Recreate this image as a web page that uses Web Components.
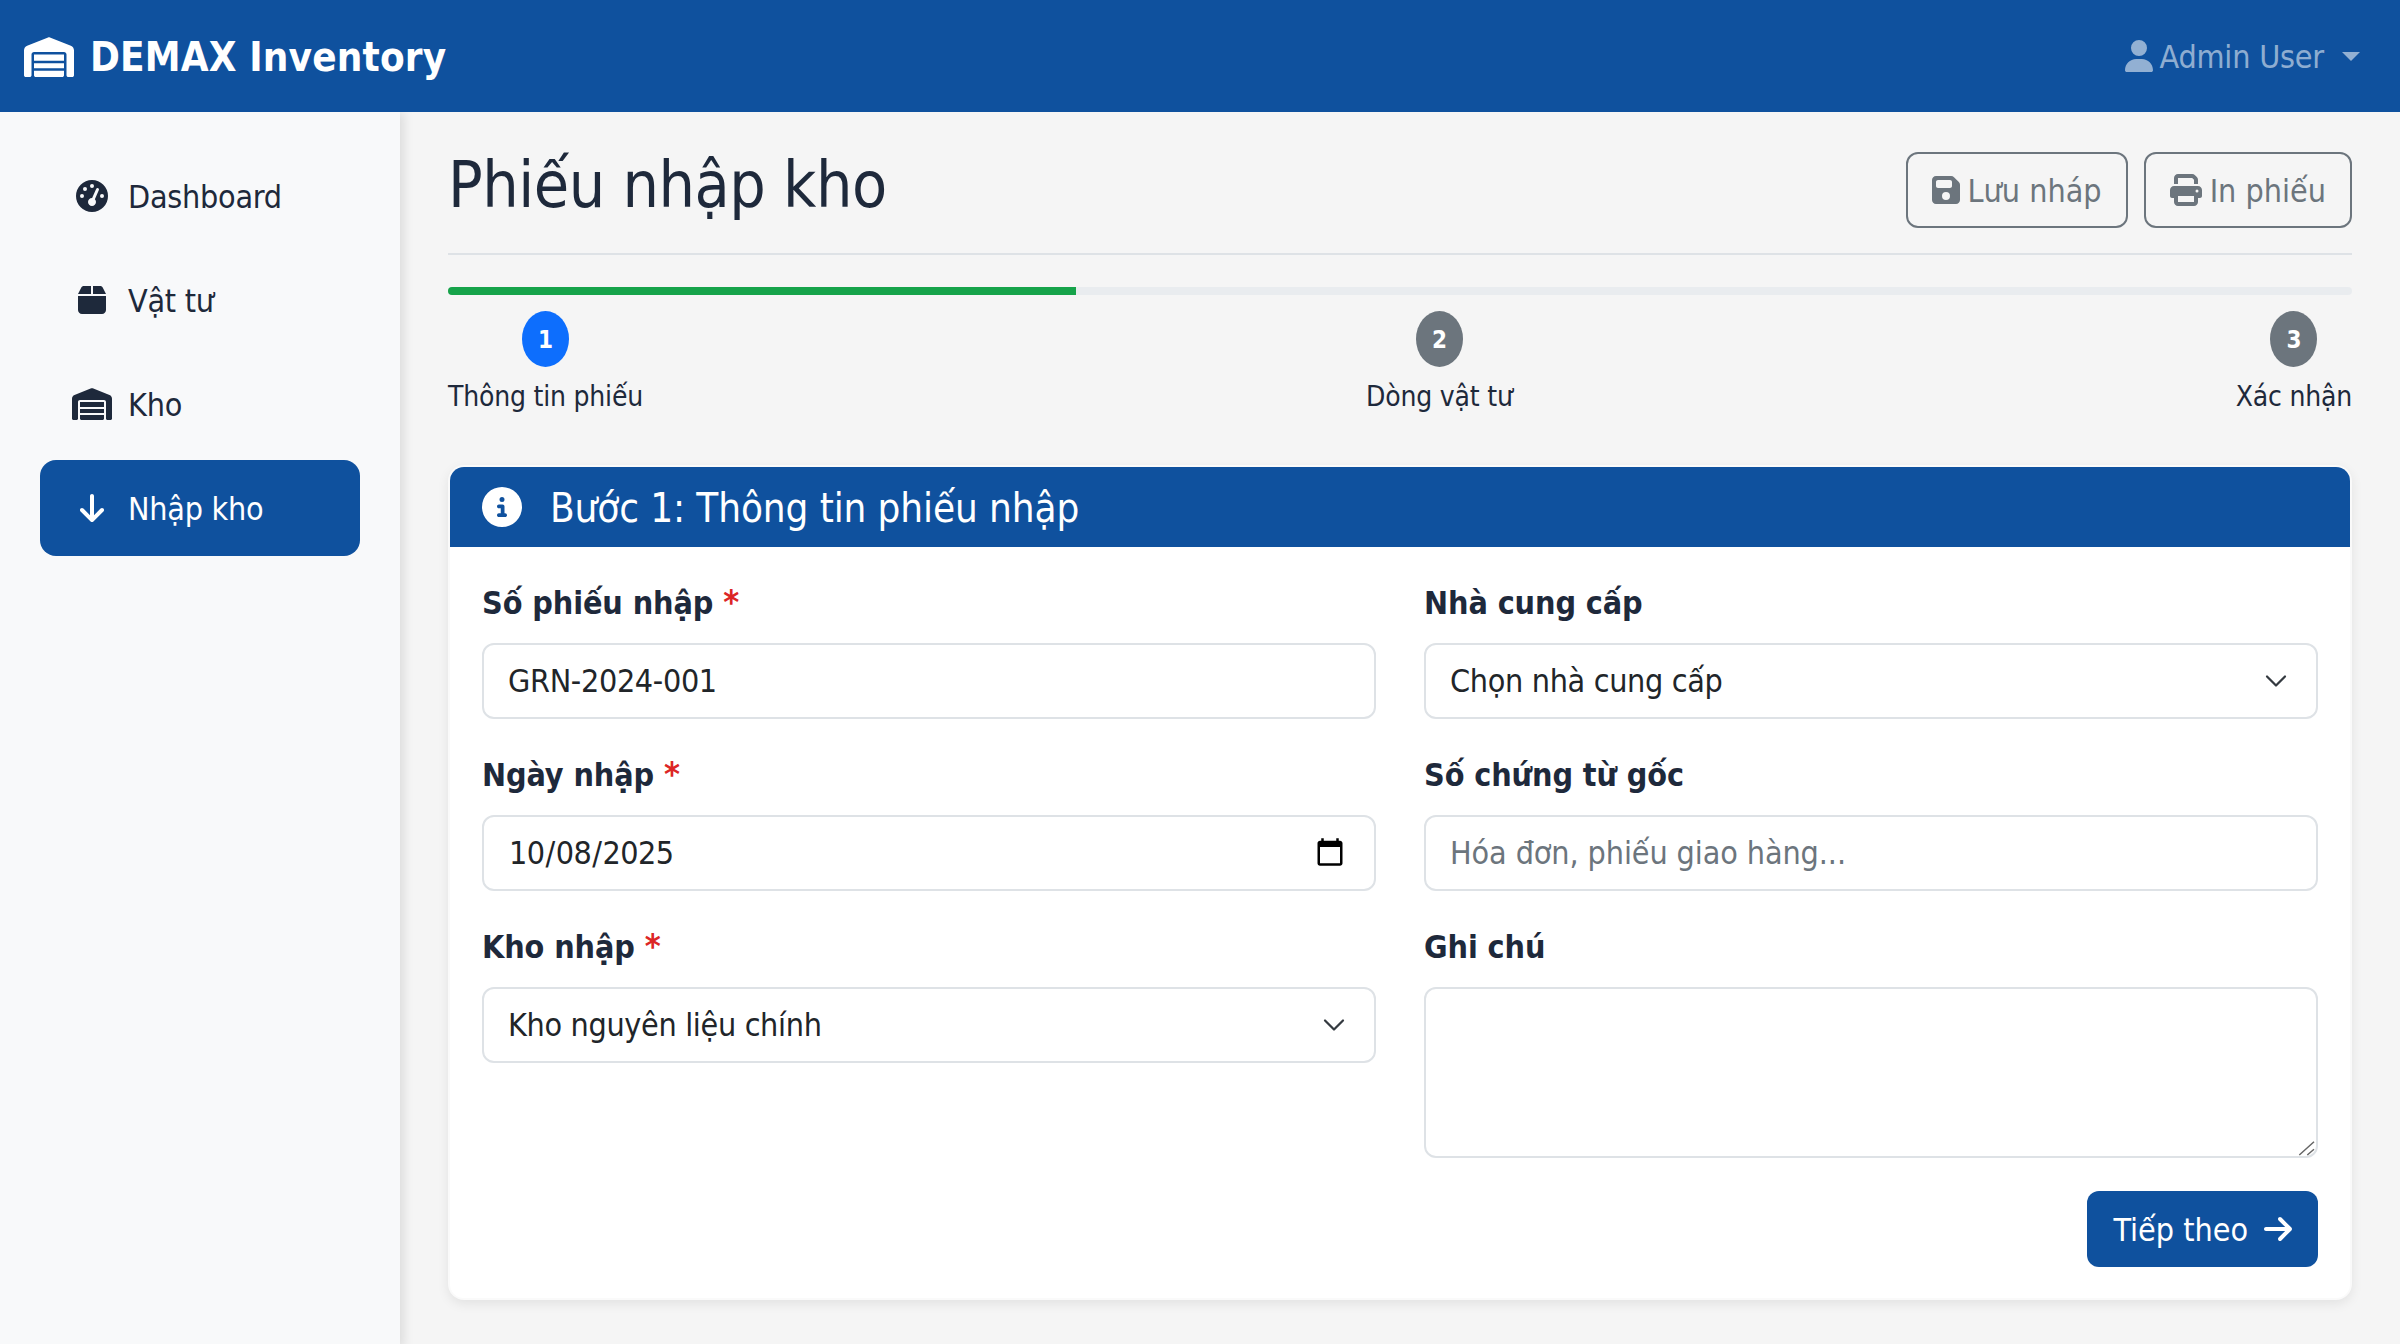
<!DOCTYPE html>
<html lang="vi">
<head>
<meta charset="utf-8">
<title>DEMAX Inventory</title>
<style>
  html, body { height: 100%; }
  body {
    margin: 0;
    overflow: hidden;
    background: #f5f5f5;
    color: #1e293b;
    font: 400 32px/48px "DejaVu Sans Condensed", "DejaVu Sans", sans-serif;
  }
</style>
</head>
<body>
<inventory-app>
  <app-navbar slot="top" user="Admin User">DEMAX Inventory</app-navbar>
  <app-sidebar slot="side">
    <nav-item icon="gauge">Dashboard</nav-item>
    <nav-item icon="box">Vật tư</nav-item>
    <nav-item icon="warehouse">Kho</nav-item>
    <nav-item icon="down" active>Nhập kho</nav-item>
  </app-sidebar>
  <page-header>
    Phiếu nhập kho
    <outline-button slot="actions" icon="floppy">Lưu nháp</outline-button>
    <outline-button slot="actions" icon="print">In phiếu</outline-button>
  </page-header>
  <step-progress percent="33">
    <step-item number="1" current>Thông tin phiếu</step-item>
    <step-item number="2">Dòng vật tư</step-item>
    <step-item number="3">Xác nhận</step-item>
  </step-progress>
  <form-card heading="Bước 1: Thông tin phiếu nhập">
    <form-field slot="left" required>Số phiếu nhập<input-box slot="control" value="GRN-2024-001"></input-box></form-field>
    <form-field slot="left" required>Ngày nhập<input-box slot="control" type="date" value="2025-10-08"></input-box></form-field>
    <form-field slot="left" required>Kho nhập<select-box slot="control" value="Kho nguyên liệu chính"></select-box></form-field>
    <form-field slot="right">Nhà cung cấp<select-box slot="control" value="Chọn nhà cung cấp"></select-box></form-field>
    <form-field slot="right">Số chứng từ gốc<input-box slot="control" placeholder="Hóa đơn, phiếu giao hàng..."></input-box></form-field>
    <form-field slot="right">Ghi chú<note-box slot="control"></note-box></form-field>
    <primary-button slot="footer">Tiếp theo</primary-button>
  </form-card>
</inventory-app>

<script>
// Font Awesome style glyphs: [viewBox width, path]
const icons = {
  warehouse: [640, 'M0 488V171.3c0-26.2 15.9-49.7 40.2-59.4L308.1 4.8c7.6-3.1 16.1-3.1 23.8 0L599.8 111.9c24.3 9.7 40.2 33.3 40.2 59.4V488c0 13.3-10.7 24-24 24H568c-13.3 0-24-10.7-24-24V224c0-17.7-14.3-32-32-32H128c-17.7 0-32 14.3-32 32V488c0 13.3-10.7 24-24 24H24c-13.3 0-24-10.7-24-24zm488 24l-336 0c-13.3 0-24-10.7-24-24V432H512l0 56c0 13.3-10.7 24-24 24zM128 400V336H512v64H128zm0-96V224H512l0 80H128z'],
  gauge: [512, 'M0 256a256 256 0 1 1 512 0A256 256 0 1 1 0 256zM288 96a32 32 0 1 0 -64 0 32 32 0 1 0 64 0zM256 416c35.3 0 64-28.7 64-64c0-17.4-6.9-33.1-18.1-44.6L366 161.7c5.3-12.1-.2-26.3-12.3-31.6s-26.3 .2-31.6 12.3L257.9 288c-.6 0-1.3 0-1.9 0c-35.3 0-64 28.7-64 64s28.7 64 64 64zM176 144a32 32 0 1 0 -64 0 32 32 0 1 0 64 0zM96 288a32 32 0 1 0 0-64 32 32 0 1 0 0 64zm352-32a32 32 0 1 0 -64 0 32 32 0 1 0 64 0z'],
  box: [448, 'M50.7 58.5L0 160H208V32H93.7C75.5 32 58.9 42.3 50.7 58.5zM240 160H448L397.3 58.5C389.1 42.3 372.5 32 354.3 32H240V160zm208 32H0V416c0 35.3 28.7 64 64 64H384c35.3 0 64-28.7 64-64V192z'],
  down: [384, 'M169.4 470.6c12.5 12.5 32.8 12.5 45.3 0l160-160c12.5-12.5 12.5-32.8 0-45.3s-32.8-12.5-45.3 0L224 370.8 224 64c0-17.7-14.3-32-32-32s-32 14.3-32 32l0 306.7L54.6 265.4c-12.5-12.5-32.8-12.5-45.3 0s-12.5 32.8 0 45.3l160 160z'],
  right: [448, 'M438.6 278.6c12.5-12.5 12.5-32.8 0-45.3l-160-160c-12.5-12.5-32.8-12.5-45.3 0s-12.5 32.8 0 45.3L338.8 224 32 224c-17.7 0-32 14.3-32 32s14.3 32 32 32l306.7 0L233.4 393.4c-12.5 12.5-12.5 32.8 0 45.3s32.8 12.5 45.3 0l160-160z'],
  user: [448, 'M224 256A128 128 0 1 0 224 0a128 128 0 1 0 0 256zm-45.7 48C79.8 304 0 383.8 0 482.3C0 498.7 13.3 512 29.7 512H418.3c16.4 0 29.7-13.3 29.7-29.7C448 383.8 368.2 304 269.7 304H178.3z'],
  floppy: [448, 'M64 32C28.7 32 0 60.7 0 96V416c0 35.3 28.7 64 64 64H384c35.3 0 64-28.7 64-64V173.3c0-17-6.7-33.3-18.7-45.3L352 50.7C340 38.7 323.7 32 306.7 32H64zm0 96c0-17.7 14.3-32 32-32H288c17.7 0 32 14.3 32 32v64c0 17.7-14.3 32-32 32H96c-17.7 0-32-14.3-32-32V128zM224 288a64 64 0 1 1 0 128 64 64 0 1 1 0-128z'],
  print: [512, 'M128 0C92.7 0 64 28.7 64 64v96h64V64H354.7L384 93.3V160h64V93.3c0-17-6.7-33.3-18.7-45.3L400 18.7C388 6.7 371.7 0 354.7 0H128zM384 352v32 64H128V384 368 352H384zm64 32h32c17.7 0 32-14.3 32-32V256c0-35.3-28.7-64-64-64H64c-35.3 0-64 28.7-64 64v96c0 17.7 14.3 32 32 32H64v64c0 35.3 28.7 64 64 64H384c35.3 0 64-28.7 64-64V384zM432 248a24 24 0 1 1 0 48 24 24 0 1 1 0-48z'],
  info: [512, 'M256 512A256 256 0 1 0 256 0a256 256 0 1 0 0 512zM216 336h24V272H216c-13.3 0-24-10.7-24-24s10.7-24 24-24h48c13.3 0 24 10.7 24 24v88h8c13.3 0 24 10.7 24 24s-10.7 24-24 24H216c-13.3 0-24-10.7-24-24s10.7-24 24-24zm40-208a32 32 0 1 1 0 64 32 32 0 1 1 0-64z']
}

/**
 * Returns the svg markup of a named icon, size is the em box in pixels.
 */
function icon (name, size) {
  const [width, path] = icons[name]
  return `<svg class="icon" width="${width / 512 * size}" height="${size}" viewBox="0 0 ${width} 512" fill="currentColor" aria-hidden="true"><path d="${path}"/></svg>`
}

/**
 * Defines a custom element whose shadow root is rendered once from a function.
 */
function define (tag, render) {
  customElements.define(tag, class extends HTMLElement {
    constructor () {
      super()
      this.attachShadow({ mode: 'open' }).innerHTML = render(this)
    }
  })
}

define('inventory-app', () => `
  <style>
    :host { display: grid; grid-template: 112px 1fr / 400px 1fr; height: 100vh; overflow: hidden; }
    ::slotted([slot="top"]) { grid-column: 1 / 3; }
    main { padding: 40px 48px 48px 48px; min-width: 0; }
  </style>
  <slot name="top"></slot>
  <slot name="side"></slot>
  <main><slot></slot></main>
`)

define('app-navbar', (el) => `
  <style>
    :host { display: flex; align-items: center; justify-content: space-between; padding: 0 40px 0 24px; background: #0f519e; position: relative; z-index: 2; }
    .brand { display: flex; align-items: center; gap: 16px; padding-top: 2px; color: #fff; font-size: 40px; font-weight: 700; line-height: 60px; letter-spacing: .15px; }
    .user { display: flex; align-items: center; color: rgba(255, 255, 255, .55); letter-spacing: -.2px; }
    .user svg { margin-right: 7px; }
    .user span:first-of-type { padding-top: 2px; }
    .caret { width: 0; height: 0; margin-left: 18px; border-top: 9.6px solid currentColor; border-left: 9.6px solid transparent; border-right: 9.6px solid transparent; }
  </style>
  <div class="brand">${icon('warehouse', 40)}<slot></slot></div>
  <div class="user">${icon('user', 32)}<span>${el.getAttribute('user')}</span><span class="caret"></span></div>
`)

define('app-sidebar', () => `
  <style>
    :host { display: flex; flex-direction: column; gap: 8px; padding: 36px 40px; background: #f8f9fa; box-shadow: 4px 0 10px rgba(0, 0, 0, .1); position: relative; z-index: 1; }
  </style>
  <slot></slot>
`)

define('nav-item', (el) => `
  <style>
    :host { display: flex; align-items: center; gap: 16px; height: 96px; padding: 0 32px; border-radius: 16px; letter-spacing: -.25px; }
    :host([active]) { background: #0f519e; color: #fff; }
    .slot { display: flex; justify-content: center; width: 40px; }
    .text { padding-top: 1px; }
  </style>
  <span class="slot">${icon(el.getAttribute('icon'), 32)}</span>
  <span class="text"><slot></slot></span>
`)

define('page-header', () => `
  <style>
    :host { display: flex; align-items: flex-start; justify-content: space-between; padding: 0 0 24px; border-bottom: 2px solid #dee2e6; margin-bottom: 32px; }
    h2 { margin: 0 0 10px; font-size: 64px; font-weight: 400; line-height: 67px; letter-spacing: -.5px; }
    div { display: flex; gap: 16px; }
  </style>
  <h2><slot></slot></h2>
  <div><slot name="actions"></slot></div>
`)

define('outline-button', (el) => `
  <style>
    :host { display: flex; align-items: center; gap: 8px; box-sizing: border-box; height: 76px; padding: 0 24px; border: 2px solid #6c757d; border-radius: 12px; color: #6c757d; }
    span { padding-top: 1px; }
  </style>
  ${icon(el.getAttribute('icon'), 32)}
  <span><slot></slot></span>
`)

define('step-progress', (el) => `
  <style>
    :host { display: block; margin-bottom: 47px; }
    .track { height: 8px; margin-bottom: 16px; border-radius: 8px; background: #e9ecef; overflow: hidden; }
    .fill { height: 100%; width: ${el.getAttribute('percent')}%; background: #16a34a; }
    .steps { display: flex; justify-content: space-between; }
  </style>
  <div class="track"><div class="fill"></div></div>
  <div class="steps"><slot></slot></div>
`)

define('step-item', (el) => `
  <style>
    :host { display: flex; flex-direction: column; align-items: center; gap: 9px; font-size: 28px; line-height: 42px; letter-spacing: -.2px; }
    .badge { display: flex; align-items: center; justify-content: center; width: 47px; height: 56px; padding-top: 1px; box-sizing: border-box; border-radius: 50%; background: #6c757d; color: #fff; font-size: 24px; font-weight: 700; }
    :host([current]) .badge { background: #0d6efd; }
  </style>
  <span class="badge">${el.getAttribute('number')}</span>
  <span><slot></slot></span>
`)

define('form-card', (el) => `
  <style>
    :host { display: block; border: 2px solid rgba(0, 0, 0, .02); border-radius: 16px; background: #fff; box-shadow: 0 4px 12px rgba(0, 0, 0, .08); overflow: hidden; }
    header { display: flex; align-items: center; gap: 28px; height: 80px; padding: 0 32px; background: #0f519e; color: #fff; font-size: 40px; letter-spacing: -.1px; }
    header span { padding-top: 2px; }
    .body { display: grid; grid-template-columns: 1fr 1fr; gap: 0 48px; padding: 32px 32px 31px; }
    .col { display: flex; flex-direction: column; gap: 32px; }
    .footer { grid-column: 1 / 3; display: flex; justify-content: flex-end; margin-top: 33px; }
  </style>
  <header>${icon('info', 40)}<span>${el.getAttribute('heading')}</span></header>
  <div class="body">
    <div class="col"><slot name="left"></slot></div>
    <div class="col"><slot name="right"></slot></div>
    <div class="footer"><slot name="footer"></slot></div>
  </div>
`)

define('form-field', (el) => `
  <style>
    :host { display: block; }
    label { display: block; margin-bottom: 16px; font-weight: 700; letter-spacing: -.1px; }
    b { color: #dc2626; font-size: 34px; line-height: 0; }
  </style>
  <label><slot></slot>${el.hasAttribute('required') ? ' <b>*</b>' : ''}</label>
  <slot name="control"></slot>
`)

const controlStyle = `
  .control {
    display: block; box-sizing: border-box; width: 100%; height: 76px; margin: 0; padding: 0 24px;
    border: 2px solid #dee2e6; border-radius: 12px; outline: 0; background: #fff; color: #212529;
    font: inherit; letter-spacing: -.33px;
  }
  .control::placeholder { color: #6c757d; opacity: 1; letter-spacing: -.1px; }
`

define('input-box', (el) => `
  <style>
    :host { display: block; }
    ${controlStyle}
    .control[type="date"] { letter-spacing: -.55px; }
    ::-webkit-calendar-picker-indicator { width: 32px; height: 32px; margin: 0 4px 0 0; padding: 0; }
  </style>
  <input class="control" type="${el.getAttribute('type') || 'text'}" value="${el.getAttribute('value') || ''}" placeholder="${el.getAttribute('placeholder') || ''}">
`)

define('select-box', (el) => `
  <style>
    :host { display: block; position: relative; }
    ${controlStyle}
    select.control { appearance: none; padding-right: 72px; }
    svg { position: absolute; top: 26px; right: 26px; pointer-events: none; }
  </style>
  <select class="control"><option>${el.getAttribute('value')}</option></select>
  <svg width="32" height="24" viewBox="0 0 16 16" fill="none" stroke="#343a40" stroke-width="1.5" stroke-linecap="round" stroke-linejoin="round"><path d="m2 5 6 6 6-6"/></svg>
`)

define('note-box', () => `
  <style>
    :host { display: block; position: relative; }
    ${controlStyle}
    textarea.control { height: 171px; padding: 12px 24px; resize: none; }
    svg { position: absolute; right: 0; bottom: 0; pointer-events: none; }
  </style>
  <textarea class="control"></textarea>
  <svg width="20" height="20" viewBox="0 0 20 20" fill="none" stroke="#666" stroke-width="1.5"><path d="M1.3 17 16 3.7M9.3 17 16 11.3"/></svg>
`)

define('primary-button', () => `
  <style>
    :host { display: flex; align-items: center; gap: 16px; box-sizing: border-box; height: 76px; padding: 0 26px; border-radius: 12px; background: #0f519e; color: #fff; }
    span { padding-top: 1px; }
  </style>
  <span><slot></slot></span>
  ${icon('right', 32)}
`)
</script>
</body>
</html>
